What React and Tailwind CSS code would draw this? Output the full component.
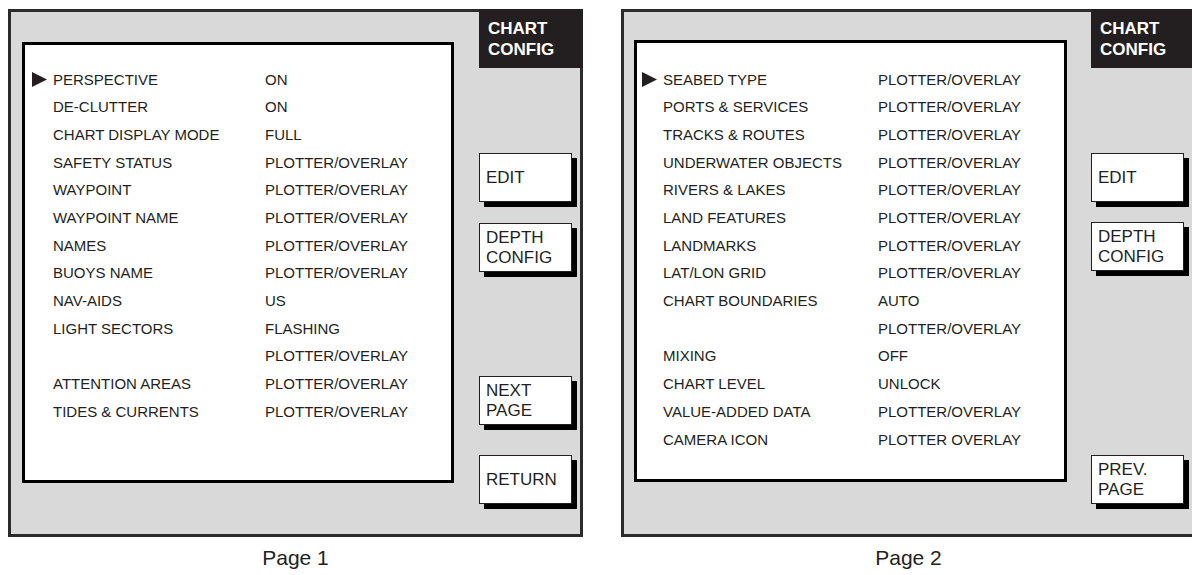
import React from 'react';

const page1 = [
  ['PERSPECTIVE', 'ON'],
  ['DE-CLUTTER', 'ON'],
  ['CHART DISPLAY MODE', 'FULL'],
  ['SAFETY STATUS', 'PLOTTER/OVERLAY'],
  ['WAYPOINT', 'PLOTTER/OVERLAY'],
  ['WAYPOINT NAME', 'PLOTTER/OVERLAY'],
  ['NAMES', 'PLOTTER/OVERLAY'],
  ['BUOYS NAME', 'PLOTTER/OVERLAY'],
  ['NAV-AIDS', 'US'],
  ['LIGHT SECTORS', 'FLASHING'],
  ['', 'PLOTTER/OVERLAY'],
  ['ATTENTION AREAS', 'PLOTTER/OVERLAY'],
  ['TIDES & CURRENTS', 'PLOTTER/OVERLAY'],
];

const page2 = [
  ['SEABED TYPE', 'PLOTTER/OVERLAY'],
  ['PORTS & SERVICES', 'PLOTTER/OVERLAY'],
  ['TRACKS & ROUTES', 'PLOTTER/OVERLAY'],
  ['UNDERWATER OBJECTS', 'PLOTTER/OVERLAY'],
  ['RIVERS & LAKES', 'PLOTTER/OVERLAY'],
  ['LAND FEATURES', 'PLOTTER/OVERLAY'],
  ['LANDMARKS', 'PLOTTER/OVERLAY'],
  ['LAT/LON GRID', 'PLOTTER/OVERLAY'],
  ['CHART BOUNDARIES', 'AUTO'],
  ['', 'PLOTTER/OVERLAY'],
  ['MIXING', 'OFF'],
  ['CHART LEVEL', 'UNLOCK'],
  ['VALUE-ADDED DATA', 'PLOTTER/OVERLAY'],
  ['CAMERA ICON', 'PLOTTER OVERLAY'],
];

// Cursor triangle in front of the selected row
const Cursor = () => (
  <svg width="15" height="15" viewBox="0 0 15 15" className="block">
    <polygon points="0,0 15,7.5 0,15" fill="#231f20" />
  </svg>
);

// Soft key with hard black drop shadow
const SoftKey = ({ lines, className = '' }) => (
  <div
    className={`flex h-[49px] w-[93px] shrink-0 flex-col justify-center border border-[#231f20] bg-white pl-[6px] text-[17px] leading-[20px] text-[#231f20] shadow-[5px_5px_0_#000] ${className}`}
  >
    {lines.map((l) => (
      <span key={l}>{l}</span>
    ))}
  </div>
);

const Screen = ({ rows, panel, list, arrowCell, arrowMl, labelW, keys, caption }) => (
  <div className="flex w-[575px] shrink-0 flex-col items-center">
    <div className="flex h-[528px] w-[575px] border-[3px] border-[#2b2b2b] bg-[#d9d9d9]">
      {/* Menu list */}
      <div className={`shrink-0 border-[3px] border-black bg-white ${panel}`}>
        <div className={list}>
          {rows.map(([label, value], i) => (
            <div key={i} className="flex h-[27.7px] items-center text-[15px] text-[#231f20]">
              <div className={`flex shrink-0 items-center ${arrowCell}`}>
                {i === 0 && (
                  <div className={arrowMl}>
                    <Cursor />
                  </div>
                )}
              </div>
              <div className={`shrink-0 ${labelW}`}>{label}</div>
              <div>{value}</div>
            </div>
          ))}
        </div>
      </div>
      {/* Soft key column */}
      <div className="flex shrink-0 flex-col">
        <div className="-mt-[3px] flex h-[59px] w-[104px] flex-col justify-center bg-[#231f20] pl-[9px] pt-[1px] text-[17px] font-bold leading-[21px] text-white">
          <span>CHART</span>
          <span>CONFIG</span>
        </div>
        {keys}
      </div>
    </div>
    <div className="mt-[9px] text-[21px] leading-[24px] text-[#231f20]">{caption}</div>
  </div>
);

export default function App() {
  return (
    <div
      className="flex h-[575px] w-[1192px] gap-[38px] overflow-hidden bg-white pl-[8px] pt-[9px]"
      style={{ fontFamily: '"Liberation Sans", Arial, sans-serif' }}
    >
      <Screen
        rows={page1}
        panel="ml-[11px] mt-[30px] mr-[25px] h-[441px] w-[432px]"
        list="pt-[21px]"
        arrowCell="w-[28px]"
        arrowMl="ml-[7px]"
        labelW="w-[212px]"
        caption="Page 1"
        keys={
          <>
            <SoftKey lines={['EDIT']} className="mt-[85px]" />
            <SoftKey lines={['DEPTH', 'CONFIG']} className="mt-[21px]" />
            <SoftKey lines={['NEXT', 'PAGE']} className="mt-[104px]" />
            <SoftKey lines={['RETURN']} className="mt-[30px]" />
          </>
        }
      />
      <Screen
        rows={page2}
        panel="ml-[10px] mt-[28px] mr-[24px] h-[442px] w-[433px]"
        list="pt-[23px]"
        arrowCell="w-[26px]"
        arrowMl="ml-[5px]"
        labelW="w-[215px]"
        caption="Page 2"
        keys={
          <>
            <SoftKey lines={['EDIT']} className="mt-[85px]" />
            <SoftKey lines={['DEPTH', 'CONFIG']} className="mt-[20px]" />
            <SoftKey lines={['PREV.', 'PAGE']} className="mt-[184px]" />
          </>
        }
      />
    </div>
  );
}
